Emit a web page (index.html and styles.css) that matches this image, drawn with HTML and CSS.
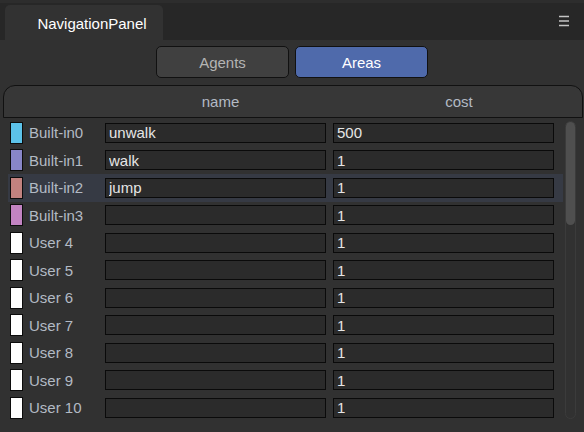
FILE: index.html
```html
<!DOCTYPE html>
<html lang="en">
<head>
    <meta charset="UTF-8">
    <title>NavigationPanel</title>
    <link rel="stylesheet" href="styles.css">
</head>
<body>
    <div class="tabbar">
        <div class="tab">NavigationPanel</div>
        <svg class="menu-icon" width="10" height="12" viewBox="0 0 10 12">
            <path d="M0 1.5h10M0 6h10M0 10.5h10" stroke="#c4c4c4" stroke-width="1.4"/>
        </svg>
    </div>

    <main class="panel">
        <div class="toggle">
            <button class="toggle-btn">Agents</button>
            <button class="toggle-btn active">Areas</button>
        </div>

        <section class="table">
            <div class="table-head">
                <span></span>
                <span>name</span>
                <span>cost</span>
            </div>
            <div class="table-body">
                <ul class="rows">
                    <li class="row"><span class="swatch swatch-0"></span><span class="label">Built-in0</span><input class="field" value="unwalk"><input class="field" value="500"></li>
                    <li class="row"><span class="swatch swatch-1"></span><span class="label">Built-in1</span><input class="field" value="walk"><input class="field" value="1"></li>
                    <li class="row selected"><span class="swatch swatch-2"></span><span class="label">Built-in2</span><input class="field" value="jump"><input class="field" value="1"></li>
                    <li class="row"><span class="swatch swatch-3"></span><span class="label">Built-in3</span><input class="field" value=""><input class="field" value="1"></li>
                    <li class="row"><span class="swatch"></span><span class="label">User 4</span><input class="field" value=""><input class="field" value="1"></li>
                    <li class="row"><span class="swatch"></span><span class="label">User 5</span><input class="field" value=""><input class="field" value="1"></li>
                    <li class="row"><span class="swatch"></span><span class="label">User 6</span><input class="field" value=""><input class="field" value="1"></li>
                    <li class="row"><span class="swatch"></span><span class="label">User 7</span><input class="field" value=""><input class="field" value="1"></li>
                    <li class="row"><span class="swatch"></span><span class="label">User 8</span><input class="field" value=""><input class="field" value="1"></li>
                    <li class="row"><span class="swatch"></span><span class="label">User 9</span><input class="field" value=""><input class="field" value="1"></li>
                    <li class="row"><span class="swatch"></span><span class="label">User 10</span><input class="field" value=""><input class="field" value="1"></li>
                </ul>
                <div class="scrollbar">
                    <div class="scroll-thumb"></div>
                </div>
            </div>
        </section>
    </main>
</body>
</html>
```

FILE: styles.css
```css
:root {
    --panel-bg: #313131;
    --bar-bg: #272727;
    --tab-bg: #323232;
    --label-text: #b3bac4;
    --field-bg: #2b2b2b;
    --accent: #4f6aab;
}

html, body {
    margin: 0;
    padding: 0;
    height: 100%;
}

body {
    font-family: "Liberation Sans", Arial, sans-serif;
    font-size: 15px;
    background-color: var(--panel-bg);
    color: var(--label-text);
    overflow: hidden;
}

.tabbar {
    display: flex;
    align-items: flex-end;
    height: 37px;
    padding-left: 5px;
    background-color: var(--bar-bg);
    border-top: 3px solid #2d2d2d;
}

.tab {
    box-sizing: border-box;
    width: 158px;
    height: 35px;
    padding-left: 16px;
    line-height: 38px;
    text-align: center;
    font-size: 15px;
    color: #ffffff;
    background-color: var(--tab-bg);
    border-radius: 5px 5px 0 0;
}

.menu-icon {
    margin-left: auto;
    margin-right: 15px;
    align-self: flex-start;
    margin-top: 12px;
}

.panel {
    display: flex;
    flex-direction: column;
    padding-top: 6px;
}

.toggle {
    display: flex;
    justify-content: center;
    gap: 6px;
}

.toggle-btn {
    width: 133px;
    height: 32px;
    font-family: inherit;
    font-size: 15px;
    color: #b4b4b4;
    background-color: #404040;
    border: 1px solid #111111;
    border-radius: 5px;
}

.toggle-btn.active {
    color: #ffffff;
    background-color: var(--accent);
}

.table {
    margin: 7px 1px 0 3px;
}

.table-head {
    display: grid;
    grid-template-columns: 101px 231px 1fr;
    height: 31px;
    line-height: 31px;
    text-align: center;
    background-color: #373737;
    border: 1px solid #111111;
    border-radius: 12px 12px 0 0;
}

.table-body {
    display: flex;
    align-items: flex-start;
}

.rows {
    list-style: none;
    margin: 0;
    padding: 1px 0 0 5px;
    width: 555px;
}

.row {
    display: flex;
    align-items: center;
    height: 27.5px;
    padding-left: 2px;
}

.row.selected {
    background-color: #363a44;
}

.swatch {
    width: 11px;
    height: 20px;
    background-color: #ffffff;
    border: 1px solid #0c0c0c;
}

.swatch-0 { background-color: #5cc2e9; }
.swatch-1 { background-color: #8886c8; }
.swatch-2 { background-color: #c2827f; }
.swatch-3 { background-color: #c283c2; }

.label {
    width: 76px;
    margin-left: 6px;
}

.field {
    box-sizing: border-box;
    width: 221px;
    height: 20px;
    margin-right: 7px;
    padding: 0 3px;
    font-family: inherit;
    font-size: 15px;
    color: #e6e6e6;
    background-color: var(--field-bg);
    border: 1px solid #0a0a0a;
    border-radius: 0;
    outline: none;
}

.scrollbar {
    box-sizing: border-box;
    width: 11px;
    height: 298px;
    margin-top: 3px;
    margin-left: 2px;
    border: 1px solid #3b3b3b;
    border-radius: 6px;
}

.scroll-thumb {
    height: 103px;
    background-color: #4f4f4f;
    border-radius: 5px;
}
```
